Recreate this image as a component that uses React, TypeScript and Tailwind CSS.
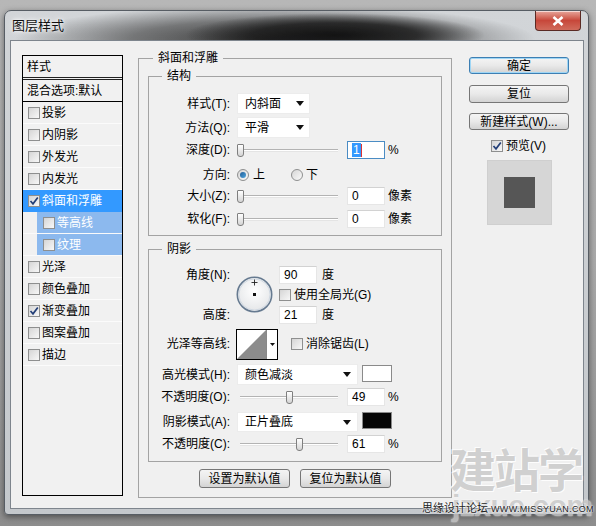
import React from 'react';

const items = [
  { t: '投影' },
  { t: '内阴影' },
  { t: '外发光' },
  { t: '内发光' },
  { t: '斜面和浮雕', on: true, sel: true },
  { t: '等高线', sub: true },
  { t: '纹理', sub: true },
  { t: '光泽' },
  { t: '颜色叠加' },
  { t: '渐变叠加', on: true },
  { t: '图案叠加' },
  { t: '描边' },
];

function Check({ on = false }: { on?: boolean }) {
  return (
    <span className="relative flex h-[12px] w-[12px] shrink-0 items-center justify-center border border-[#8e8f8f] bg-gradient-to-br from-[#d4d4d4] to-[#f8f8f8]">
      <span className="h-[8px] w-[8px] bg-gradient-to-br from-[#d9d9d9] to-[#f4f4f4]" />
      {on && (
        <svg className="absolute left-[0px] top-[0px]" width="10" height="10" viewBox="0 0 10 10">
          <path d="M1.5 5 L4 7.8 L8.8 1.5" fill="none" stroke="#233f78" strokeWidth="1.7" />
        </svg>
      )}
    </span>
  );
}

function Radio({ on = false }: { on?: boolean }) {
  return (
    <span className="flex h-[12px] w-[12px] shrink-0 items-center justify-center rounded-full border border-[#8e8f8f] bg-gradient-to-br from-[#d6d6d6] to-[#fafafa]">
      {on && <span className="h-[6px] w-[6px] rounded-full bg-gradient-to-br from-[#1d5c96] to-[#53a8e0]" />}
    </span>
  );
}

function Arrow() {
  return (
    <svg width="8" height="5" viewBox="0 0 8 5" className="shrink-0">
      <polygon points="0,0 8,0 4,5" fill="#111" />
    </svg>
  );
}

function Slider({ value }: { value: number }) {
  return (
    <div className="relative h-[18px] w-[101px] shrink-0">
      <div className="absolute left-[3px] right-0 top-[8px] h-[3px] border-t border-b border-t-[#b3b3b3] border-b-[#e4e4e4] bg-white" />
      <div
        className="absolute top-[3px] h-[13px] w-[7px] rounded-b-[3px] rounded-t-[1px] border border-[#7f7f7f] bg-gradient-to-b from-white to-[#d4d4d4]"
        style={{ left: Math.round(value * 0.97) }}
      />
    </div>
  );
}

function Num({ v, focus = false }: { v: string; focus?: boolean }) {
  return (
    <div
      className={
        'flex h-[18px] w-[38px] shrink-0 items-center bg-white pl-[4px] ' +
        (focus ? 'border border-[#4a8cc4]' : 'border border-[#e6e6e6] border-t-[#d2d2d2]')
      }
    >
      {focus ? (
        <span className="flex items-center">
          <span className="bg-[#3399ff] px-[1px] leading-[14px] text-white">1</span>
          <span className="h-[13px] w-[1px] bg-[#d33]" />
        </span>
      ) : (
        <span className="leading-[14px]">{v}</span>
      )}
    </div>
  );
}

function Label({ children }: { children: React.ReactNode }) {
  return <span className="w-[81px] shrink-0 text-right leading-[16px]">{children}</span>;
}

function WinButton({ children, primary = false, w = 'w-[100px]', h = 'h-[17px]' }: { children: React.ReactNode; primary?: boolean; w?: string; h?: string }) {
  return (
    <div
      className={
        'flex items-center justify-center rounded-[3px] border bg-gradient-to-b from-[#f4f4f4] via-[#e9e9e9] to-[#d3d3d3] leading-[14px] ' +
        w +
        ' ' +
        h +
        (primary ? ' border-[#3d7fb3] shadow-[inset_0_0_0_1px_#9fd6f5]' : ' border-[#767676]')
      }
    >
      {children}
    </div>
  );
}

export default function App() {
  return (
    <div className="relative h-[526px] w-[596px] overflow-hidden bg-gradient-to-b from-[#b7b7b7] via-[#a9a9a9] to-[#8d8d8d] pl-[4px] pt-[10px] font-['Liberation_Sans','Noto_Sans_CJK_SC',sans-serif] text-[12px] text-black">
      {/* window */}
      <div className="h-[505px] w-[585px] rounded-t-[7px] rounded-b-[4px] border border-[#575d64] bg-gradient-to-b from-[#d2d5d8] to-[#c4c8cc] shadow-[0_2px_6px_rgba(0,0,0,0.45)]">
        <div className="flex h-[29px] items-start justify-between rounded-t-[6px] bg-[radial-gradient(ellipse_150px_22px_at_330px_24px,rgba(15,15,15,0.95)_0%,rgba(25,25,25,0.8)_55%,rgba(40,40,40,0)_100%),radial-gradient(ellipse_260px_34px_at_270px_28px,rgba(35,35,35,0.9)_0%,rgba(55,55,55,0.6)_55%,rgba(200,204,208,0)_100%)] pl-[7px]">
          <span className="mt-[7px] text-[13px] leading-[16px] text-[#111] [text-shadow:0_0_6px_#fff,0_0_3px_#fff]">图层样式</span>
          <div className="mr-[7px] flex h-[20px] w-[46px] items-center justify-center rounded-b-[4px] border border-t-0 border-[#5a2a24] bg-gradient-to-b from-[#e6a69c] via-[#c7473a] to-[#d06b5c] shadow-[inset_0_1px_0_rgba(255,255,255,0.6)]">
            <svg width="12" height="10" viewBox="0 0 12 10">
              <path d="M1.5 1 L10.5 9 M10.5 1 L1.5 9" stroke="#fff" strokeWidth="2.6" />
            </svg>
          </div>
        </div>

        {/* client */}
        <div className="ml-[5px] flex h-[469px] w-[574px] border border-[#7e858d] bg-[#f0f0f0] pl-[11px] pt-[8px]">
          {/* styles list */}
          <div className="mt-[6px] h-[441px] w-[101px] shrink-0 border border-black bg-[#f1f1f1]">
            <div className="flex h-[24px] items-center border-b-[3px] border-double border-[#222] pl-[4px]">样式</div>
            <div className="flex h-[22px] items-center border-b border-black pl-[4px]">混合选项:默认</div>
            {items.map((it) =>
              it.sub ? (
                <div key={it.t} className="flex h-[22px] border-b border-[#fafafa] pl-[14px]">
                  <div className="flex flex-1 items-center gap-[2px] bg-[#8cb9ee] pl-[6px] text-white">
                    <Check />
                    <span>{it.t}</span>
                  </div>
                </div>
              ) : (
                <div
                  key={it.t}
                  className={
                    'flex h-[22px] items-center gap-[2px] border-b pl-[5px] ' +
                    (it.sel ? 'border-[#3399ff] bg-[#3399ff] text-white' : 'border-[#fbfbfb]')
                  }
                >
                  <Check on={it.on} />
                  <span>{it.t}</span>
                </div>
              )
            )}
          </div>

          {/* bevel & emboss */}
          <div className="ml-[15px] flex flex-col">
            <fieldset className="h-[449px] w-[314px] border border-[#a3a3a3] px-[9px]">
              <legend className="ml-[5px] px-[5px] leading-[18px]">斜面和浮雕</legend>

              <fieldset className="h-[169px] w-[294px] border border-[#a3a3a3]">
                <legend className="ml-[13px] px-[5px] leading-[18px]">结构</legend>
                <div className="mt-[8px] flex h-[21px] items-center">
                  <Label>样式(T):</Label>
                  <div className="ml-[7px] flex h-[21px] w-[73px] items-center justify-between border border-[#ececec] bg-white pl-[7px] pr-[5px]">
                    <span>内斜面</span>
                    <Arrow />
                  </div>
                </div>
                <div className="mt-[3px] flex h-[21px] items-center">
                  <Label>方法(Q):</Label>
                  <div className="ml-[7px] flex h-[21px] w-[73px] items-center justify-between border border-[#ececec] bg-white pl-[7px] pr-[5px]">
                    <span>平滑</span>
                    <Arrow />
                  </div>
                </div>
                <div className="mt-[3px] flex h-[18px] items-center">
                  <Label>深度(D):</Label>
                  <div className="ml-[7px]">
                    <Slider value={0} />
                  </div>
                  <div className="ml-[9px]">
                    <Num v="1" focus />
                  </div>
                  <span className="ml-[3px]">%</span>
                </div>
                <div className="mt-[7px] flex h-[18px] items-center">
                  <Label>方向:</Label>
                  <div className="ml-[7px] flex items-center gap-[4px]">
                    <Radio on />
                    <span>上</span>
                  </div>
                  <div className="ml-[26px] flex items-center gap-[3px]">
                    <Radio />
                    <span>下</span>
                  </div>
                </div>
                <div className="mt-[3px] flex h-[18px] items-center">
                  <Label>大小(Z):</Label>
                  <div className="ml-[7px]">
                    <Slider value={0} />
                  </div>
                  <div className="ml-[9px]">
                    <Num v="0" />
                  </div>
                  <span className="ml-[3px]">像素</span>
                </div>
                <div className="mt-[5px] flex h-[18px] items-center">
                  <Label>软化(F):</Label>
                  <div className="ml-[7px]">
                    <Slider value={0} />
                  </div>
                  <div className="ml-[9px]">
                    <Num v="0" />
                  </div>
                  <span className="ml-[3px]">像素</span>
                </div>
              </fieldset>

              <fieldset className="mt-[4px] h-[222px] w-[294px] border border-[#a3a3a3]">
                <legend className="ml-[13px] px-[5px] leading-[18px]">阴影</legend>
                <div className="mt-[8px] flex h-[58px]">
                  <div className="flex w-[81px] shrink-0 flex-col justify-between pb-[1px] pt-[1px] text-right">
                    <span className="leading-[16px]">角度(N):</span>
                    <span className="leading-[16px]">高度:</span>
                  </div>
                  <svg className="ml-[6px] mt-[10px] shrink-0" width="37" height="37" viewBox="0 0 37 37">
                    <defs>
                      <radialGradient id="dial" cx="50%" cy="40%" r="60%">
                        <stop offset="0%" stopColor="#ffffff" />
                        <stop offset="100%" stopColor="#e4e6e8" />
                      </radialGradient>
                    </defs>
                    <circle cx="18.5" cy="18.5" r="17.2" fill="url(#dial)" stroke="#667a90" strokeWidth="1.6" />
                    <circle cx="18.5" cy="18.5" r="15.6" fill="none" stroke="#c9d3de" strokeWidth="0.8" />
                    <path d="M18.5 3.5 V9.5 M15.5 6.5 H21.5" stroke="#222" strokeWidth="0.9" />
                    <rect x="17" y="17" width="3" height="3" fill="#111" />
                  </svg>
                  <div className="ml-[6px] flex flex-col">
                    <div className="flex h-[18px] items-center">
                      <Num v="90" />
                      <span className="ml-[5px]">度</span>
                    </div>
                    <div className="flex h-[22px] items-center gap-[3px]">
                      <Check />
                      <span>使用全局光(G)</span>
                    </div>
                    <div className="flex h-[18px] items-center">
                      <Num v="21" />
                      <span className="ml-[5px]">度</span>
                    </div>
                  </div>
                </div>

                <div className="mt-[5px] flex h-[30px] items-center">
                  <Label>光泽等高线:</Label>
                  <div className="ml-[6px] flex h-[31px] w-[42px] border border-black bg-white">
                    <svg width="29" height="29" viewBox="0 0 29 29" className="shrink-0">
                      <polygon points="0,29 29,0 29,29" fill="#8c8c8c" />
                    </svg>
                    <div className="flex flex-1 items-center justify-center border-l border-[#888]">
                      <svg width="5" height="3" viewBox="0 0 5 3">
                        <polygon points="0,0 5,0 2.5,3" fill="#111" />
                      </svg>
                    </div>
                  </div>
                  <div className="ml-[13px] flex items-center gap-[3px]">
                    <Check />
                    <span>消除锯齿(L)</span>
                  </div>
                </div>

                <div className="mt-[5px] flex h-[21px] items-start">
                  <Label>
                    <span className="block pt-[3px]">高光模式(H):</span>
                  </Label>
                  <div className="ml-[7px] flex h-[21px] w-[121px] items-center justify-between border border-[#ececec] bg-white pl-[7px] pr-[6px]">
                    <span>颜色减淡</span>
                    <Arrow />
                  </div>
                  <div className="ml-[4px] mt-[1px] h-[17px] w-[30px] border border-[#8a8a8a] bg-white" />
                </div>
                <div className="mt-[3px] flex h-[18px] items-center">
                  <Label>不透明度(O):</Label>
                  <div className="ml-[7px]">
                    <Slider value={51} />
                  </div>
                  <div className="ml-[9px]">
                    <Num v="49" />
                  </div>
                  <span className="ml-[3px]">%</span>
                </div>
                <div className="mt-[6px] flex h-[20px] items-start">
                  <Label>
                    <span className="block pt-[2px]">阴影模式(A):</span>
                  </Label>
                  <div className="ml-[7px] flex h-[20px] w-[121px] items-center justify-between border border-[#ececec] bg-white pl-[7px] pr-[6px]">
                    <span>正片叠底</span>
                    <Arrow />
                  </div>
                  <div className="ml-[4px] h-[17px] w-[30px] border border-[#8a8a8a] bg-[#050505]" />
                </div>
                <div className="mt-[3px] flex h-[18px] items-center">
                  <Label>不透明度(C):</Label>
                  <div className="ml-[7px]">
                    <Slider value={61} />
                  </div>
                  <div className="ml-[9px]">
                    <Num v="61" />
                  </div>
                  <span className="ml-[3px]">%</span>
                </div>
              </fieldset>

              <div className="mt-[7px] flex justify-center gap-[10px]">
                <WinButton w="w-[91px]" h="h-[19px]">设置为默认值</WinButton>
                <WinButton w="w-[91px]" h="h-[19px]">复位为默认值</WinButton>
              </div>
            </fieldset>
          </div>

          {/* right column */}
          <div className="ml-[17px] mt-[8px] flex w-[101px] flex-col">
            <WinButton primary>确定</WinButton>
            <div className="mt-[11px]">
              <WinButton h="h-[18px]">复位</WinButton>
            </div>
            <div className="mt-[10px]">
              <WinButton>新建样式(W)...</WinButton>
            </div>
            <div className="mt-[9px] flex h-[14px] items-center justify-center gap-[3px] pr-[2px]">
              <Check on />
              <span>预览(V)</span>
            </div>
            <div className="mt-[7px] flex justify-center">
              <div className="flex h-[65px] w-[65px] items-center justify-center border border-[#cfcfcf] bg-[#d6d6d6]">
                <div className="h-[31px] w-[31px] bg-[#565656]" />
              </div>
            </div>
          </div>
        </div>
      </div>

      {/* watermark */}
      <div className="pointer-events-none absolute left-[450px] top-[446px] whitespace-nowrap text-[46px] font-bold leading-[50px] tracking-[-2px] text-[#cdcdcd] opacity-90 [text-shadow:0_0_2px_#fff,1px_1px_0_#fff,-1px_-1px_0_#fff]">
        建站学
      </div>
      <div className="pointer-events-none absolute left-[452px] top-[490px] whitespace-nowrap text-[30px] font-bold leading-[32px] tracking-[-0.5px] text-[#c8c8c8] opacity-80 [text-shadow:0_0_2px_#fff]">
        jzxue.com
      </div>
      <div className="pointer-events-none absolute left-[422px] top-[502px] whitespace-nowrap text-[11px] leading-[13px] text-[#222] [text-shadow:0_0_2px_#fff,0_0_2px_#fff]">
        思缘设计论坛 <span className="text-[9px] tracking-[0.3px]">WWW.MISSYUAN.COM</span>
      </div>
    </div>
  );
}
